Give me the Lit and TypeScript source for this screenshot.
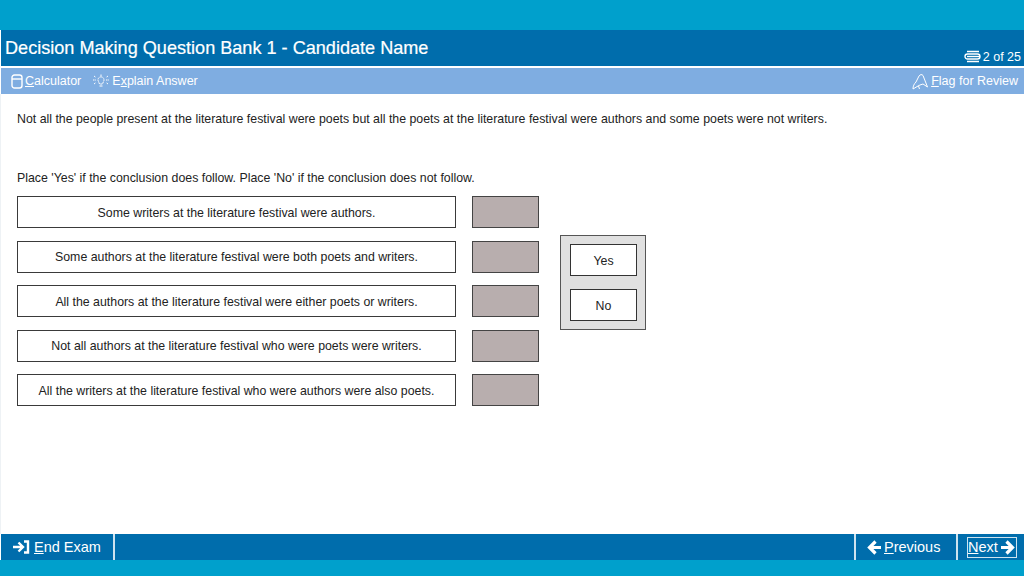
import { LitElement, html, css, svg } from "lit";
import { customElement } from "lit/decorators.js";

const statements = [
  "Some writers at the literature festival were authors.",
  "Some authors at the literature festival were both poets and writers.",
  "All the authors at the literature festival were either poets or writers.",
  "Not all authors at the literature festival who were poets were writers.",
  "All the writers at the literature festival who were authors were also poets.",
];

@customElement("app-root")
export class AppRoot extends LitElement {
  static styles = css`
    :host {
      display: flex;
      flex-direction: column;
      width: 1024px;
      height: 576px;
      overflow: hidden;
      background: #fff;
      font-family: "Liberation Sans", Arial, sans-serif;
      color: #222;
    }
    .band-top { height: 30px; background: #00a0cc; flex: none; }
    .band-bottom { height: 16px; background: #00a0cc; flex: none; }
    .title {
      height: 36px; flex: none; background: #006dac; color: #fff;
      margin-left: 1px; padding: 0 3px 0 4px;
      display: flex; justify-content: space-between;
    }
    .title h1 { margin: 8px 0 0; font-size: 18.1px; font-weight: 400; line-height: 21px; -webkit-text-stroke: 0.2px #fff; }
    .count { display: flex; align-items: center; gap: 2px; font-size: 12.5px; align-self: flex-end; height: 20px; padding-top: 1px; box-sizing: border-box; }
    .tools {
      height: 26px; flex: none; margin: 2px 0 0 1px; background: #7fade1; color: #fff;
      display: flex; align-items: center; padding: 0 6px 0 10px; font-size: 12.5px;
    }
    .tool { display: flex; align-items: center; gap: 2px; }
    .tool + .tool { margin-left: 11px; }
    .tool.flag { margin-left: auto; }
    u { text-underline-offset: 1px; }
    .main { flex: 1; min-height: 0; padding: 0 0 0 16px; border-left: 1px solid #eef2f5; font-size: 12.35px; }
    .stem { margin: 18px 0 0; line-height: 15px; height: 15px; }
    .instr { margin: 44px 0 0; line-height: 15px; height: 15px; }
    .work { display: flex; margin-top: 10px; align-items: flex-start; }
    .rows { display: flex; flex-direction: column; gap: 12.5px; width: 522px; }
    .row { display: flex; gap: 16px; height: 32px; }
    .stmt {
      width: 439px; box-sizing: border-box; border: 1px solid #3a3a3a; background: #fff; padding-top: 1px;
      display: flex; align-items: center; justify-content: center;
    }
    .drop { width: 67px; box-sizing: border-box; border: 1px solid #444; background: #b8aeae; }
    .palette {
      margin: 39px 0 0 21px; width: 86px; height: 95px; box-sizing: border-box;
      border: 1px solid #555; background: #e0e0e0; padding: 8px 8px 8px 9px;
      display: flex; flex-direction: column; gap: 13px;
    }
    .opt {
      height: 32px; box-sizing: border-box; border: 1px solid #333; background: #fff; padding-top: 1px;
      display: flex; align-items: center; justify-content: center;
    }
    .footer {
      height: 26px; flex: none; background: #006dac; color: #fff; margin-left: 1px;
      display: flex; font-size: 14.5px;
    }
    .fbtn { display: flex; align-items: center; gap: 4px; box-sizing: border-box; height: 26px; }
    .end { width: 114px; padding-left: 12px; border-right: 2px solid #cfe3ef; }
    .prev { margin-left: auto; width: 102px; padding-left: 11px; gap: 3px; border-left: 2px solid #cfe3ef; }
    .next { width: 68px; padding-left: 9px; border-left: 2px solid #cfe3ef; }
    .focus { display: flex; align-items: center; gap: 3px; border: 1px solid #cfe3ef; padding: 0 1px 0 0; height: 19px; }
    svg { display: block; flex: none; }
  `;

  render() {
    return html`
      <div class="band-top"></div>
      <div class="title">
        <h1>Decision Making Question Bank 1 - Candidate Name</h1>
        <div class="count">
          <svg width="17" height="13" viewBox="0 0 17 13" fill="none" stroke="#fff" stroke-width="1.4">
            ${svg`<path d="M3 1.5h12M3 11.5h12"/><rect x="1" y="4" width="15" height="5" rx="2.5"/><path d="M3 6.5h13"/>`}
          </svg>
          <span>2 of 25</span>
        </div>
      </div>
      <div class="tools">
        <div class="tool">
          <svg width="12" height="15" viewBox="0 0 12 15" fill="none" stroke="#fff" stroke-width="1.4">
            ${svg`<rect x="1" y="1" width="10" height="13" rx="2.5"/><path d="M1 5h10"/>`}
          </svg>
          <span><u>C</u>alculator</span>
        </div>
        <div class="tool">
          <svg width="18" height="15" viewBox="0 0 18 15" fill="none" stroke="#fff" stroke-width="1">
            ${svg`<path d="M6.500 7.500a3 3 0 1 1 5 0l-1 2.500h-3z" stroke-dasharray="2 .6"/><path d="M7.500 12h3"/><path d="M9 0.500v1.500M1 6h3M14 6h3M2 2l2 1.500M16 2l-2 1.500M2 10l2-1.500M16 10l-2-1.500" stroke-dasharray="1.500 .7"/>`}
          </svg>
          <span>E<u>x</u>plain Answer</span>
        </div>
        <div class="tool flag">
          <svg width="17" height="17" viewBox="0 0 17 17" fill="none" stroke="#fff" stroke-width="1">
            ${svg`<path d="M1 16c0-3 1-5 3-7l3-6c1-1.500 3-2 4-.5l4.500 11.500-4.500-3-3 1-2 1-5 3z"/><path d="M6.500 13l1 3"/>`}
          </svg>
          <span><u>F</u>lag for Review</span>
        </div>
      </div>
      <div class="main">
        <p class="stem">Not all the people present at the literature festival were poets but all the poets at the literature festival were authors and some poets were not writers.</p>
        <p class="instr">Place 'Yes' if the conclusion does follow. Place 'No' if the conclusion does not follow.</p>
        <div class="work">
          <div class="rows">
            ${statements.map(
              (s) => html`<div class="row"><div class="stmt">${s}</div><div class="drop"></div></div>`
            )}
          </div>
          <div class="palette">
            <div class="opt">Yes</div>
            <div class="opt">No</div>
          </div>
        </div>
      </div>
      <div class="footer">
        <div class="fbtn end">
          <svg width="17" height="14" viewBox="0 0 17 14" fill="none" stroke="#fff" stroke-width="2.400">
            ${svg`<path d="M0 7h9M5.500 2.500l4.500 4.500-4.500 4.500"/><path d="M11 1.500h4v11h-4"/>`}
          </svg>
          <span><u>E</u>nd Exam</span>
        </div>
        <div class="fbtn prev">
          <svg width="14" height="15" viewBox="0 0 14 15" fill="none" stroke="#fff" stroke-width="3.200">
            ${svg`<path d="M14 7.500H3M8.500 1.500L2.500 7.500l6 6"/>`}
          </svg>
          <span><u>P</u>revious</span>
        </div>
        <div class="fbtn next">
          <div class="focus">
            <span><u>N</u>ext</span>
            <svg width="14" height="15" viewBox="0 0 14 15" fill="none" stroke="#fff" stroke-width="3.200">
              ${svg`<path d="M0 7.500h11M5.500 1.500l6 6-6 6"/>`}
            </svg>
          </div>
        </div>
      </div>
      <div class="band-bottom"></div>
    `;
  }
}
